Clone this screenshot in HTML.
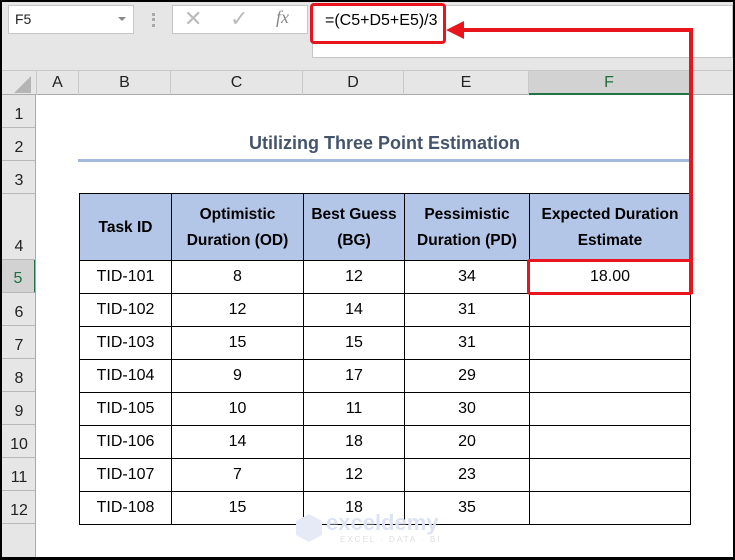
<!DOCTYPE html>
<html><head><meta charset="utf-8"><style>
*{margin:0;padding:0;box-sizing:border-box}
body{width:735px;height:560px;overflow:hidden;background:#000;font-family:"Liberation Sans",sans-serif;position:relative}
.a{position:absolute}
#main{left:2px;top:2px;width:731px;height:555px;background:#e6e6e6}
.rh{position:absolute;left:2px;width:34px;border-bottom:1px solid #b8b8b8;background:#e6e6e6;color:#222;font-size:16px;text-align:center}
.ch{position:absolute;top:71px;height:24px;border-right:1px solid #c8c8c8;color:#222;font-size:16px;text-align:center;line-height:24px}
table{position:absolute;left:79px;top:193px;border-collapse:collapse;font-size:16px;color:#000}
td{border:1.5px solid #000;text-align:center;padding:0}
.h td{background:#b4c6e7;font-weight:bold;font-size:15.5px;line-height:26px;height:67px;padding-top:2px}
.r td{height:33px}
</style></head><body>
<div class="a" id="main"></div>
<div class="a" style="left:8px;top:5px;width:126px;height:29px;background:#fff;border:1px solid #c6c6c6;font-size:14px;line-height:27px;padding-left:6px;color:#222">F5</div>
<div class="a" style="left:118px;top:17px;width:0;height:0;border-left:4px solid transparent;border-right:4px solid transparent;border-top:4px solid #888"></div>
<div class="a" style="left:152px;top:13px;width:3px;height:14px;border-left:3px dotted #aaa"></div>
<div class="a" style="left:172px;top:5px;width:136px;height:29px;background:#fff;border:1px solid #c6c6c6"></div>
<div class="a" style="left:184px;top:6px;font-size:22px;color:#bbb">✕</div>
<div class="a" style="left:230px;top:6px;font-size:22px;color:#bbb">✓</div>
<div class="a" style="left:276px;top:7px;font-size:18px;color:#888;font-style:italic;font-family:'Liberation Serif',serif">fx</div>
<div class="a" style="left:312px;top:5px;width:421px;height:53px;background:#fff;border:1px solid #c6c6c6"></div>
<div class="a" style="left:325px;top:12px;font-size:16px;color:#000">=(C5+D5+E5)/3</div>
<div class="a" style="left:310px;top:3px;width:136px;height:41px;border:3.5px solid #e8151c;border-radius:4px"></div>
<div class="a" style="left:2px;top:70px;width:731px;height:25px;background:#e6e6e6;border-top:1px solid #c8c8c8;border-bottom:1px solid #aaa"></div>
<div class="a" style="left:14px;top:76px;width:0;height:0;border-left:17px solid transparent;border-bottom:17px solid #b5b5b5"></div>
<div class="ch" style="left:36px;width:43px;border-left:1px solid #c8c8c8">A</div>
<div class="ch" style="left:79px;width:92px">B</div>
<div class="ch" style="left:171px;width:132px">C</div>
<div class="ch" style="left:303px;width:101px">D</div>
<div class="ch" style="left:404px;width:125px">E</div>
<div class="ch" style="left:529px;width:161px;background:#d2d2d2;border-bottom:2px solid #217346;color:#1e6e42">F</div>
<div class="a" style="left:36px;top:95px;width:697px;height:462px;background:#fff"></div>
<div class="rh" style="top:95px;height:33px;line-height:40px">1</div>
<div class="rh" style="top:128px;height:33px;line-height:40px">2</div>
<div class="rh" style="top:161px;height:33px;line-height:40px">3</div>
<div class="rh" style="top:194px;height:66px;line-height:106px">4</div>
<div class="rh" style="top:260px;height:33px;line-height:38px;background:#d2d2d2;color:#1e6e42;border-right:2px solid #217346">5</div>
<div class="rh" style="top:293px;height:33px;line-height:40px">6</div>
<div class="rh" style="top:326px;height:33px;line-height:40px">7</div>
<div class="rh" style="top:359px;height:33px;line-height:40px">8</div>
<div class="rh" style="top:392px;height:33px;line-height:40px">9</div>
<div class="rh" style="top:425px;height:33px;line-height:40px">10</div>
<div class="rh" style="top:458px;height:33px;line-height:40px">11</div>
<div class="rh" style="top:491px;height:33px;line-height:40px">12</div>
<div class="rh" style="top:524px;height:33px;border-bottom:none"></div>
<div class="a" style="left:35px;top:95px;width:1px;height:462px;background:#aaa"></div>
<div class="a" style="left:79px;top:133px;width:611px;text-align:center;font-size:18px;font-weight:bold;color:#44546a">Utilizing Three Point Estimation</div>
<div class="a" style="left:78px;top:159px;width:612px;height:3px;background:#a5b8dd"></div>
<table>
<colgroup><col style="width:92px"><col style="width:132px"><col style="width:101px"><col style="width:125px"><col style="width:161px"></colgroup>
<tr class="h"><td>Task ID</td><td>Optimistic<br>Duration (OD)</td><td>Best Guess<br>(BG)</td><td>Pessimistic<br>Duration (PD)</td><td>Expected Duration<br>Estimate</td></tr>
<tr class="r"><td>TID-101</td><td>8</td><td>12</td><td>34</td><td>18.00</td></tr>
<tr class="r"><td>TID-102</td><td>12</td><td>14</td><td>31</td><td></td></tr>
<tr class="r"><td>TID-103</td><td>15</td><td>15</td><td>31</td><td></td></tr>
<tr class="r"><td>TID-104</td><td>9</td><td>17</td><td>29</td><td></td></tr>
<tr class="r"><td>TID-105</td><td>10</td><td>11</td><td>30</td><td></td></tr>
<tr class="r"><td>TID-106</td><td>14</td><td>18</td><td>20</td><td></td></tr>
<tr class="r"><td>TID-107</td><td>7</td><td>12</td><td>23</td><td></td></tr>
<tr class="r"><td>TID-108</td><td>15</td><td>18</td><td>35</td><td></td></tr>
</table>
<div class="a" style="left:527px;top:259px;width:166px;height:36px;border:3.5px solid #e8151c;border-radius:3px"></div>
<div class="a" style="left:689px;top:28px;width:4px;height:266px;background:#e8151c"></div>
<div class="a" style="left:460px;top:28px;width:233px;height:4px;background:#e8151c"></div>
<div class="a" style="left:446px;top:21px;width:0;height:0;border-top:9px solid transparent;border-bottom:9px solid transparent;border-right:18px solid #e8151c"></div>
<div class="a" style="left:296px;top:514px;width:26px;height:28px;background:#e6eaf6;clip-path:polygon(50% 0,100% 25%,100% 75%,50% 100%,0 75%,0 25%)"></div>
<div class="a" style="left:326px;top:510px;font-size:22px;font-weight:bold;color:#dde3f4">exceldemy</div>
<div class="a" style="left:340px;top:535px;font-size:8px;letter-spacing:2px;color:#dedede">EXCEL · DATA · BI</div>
</body></html>
